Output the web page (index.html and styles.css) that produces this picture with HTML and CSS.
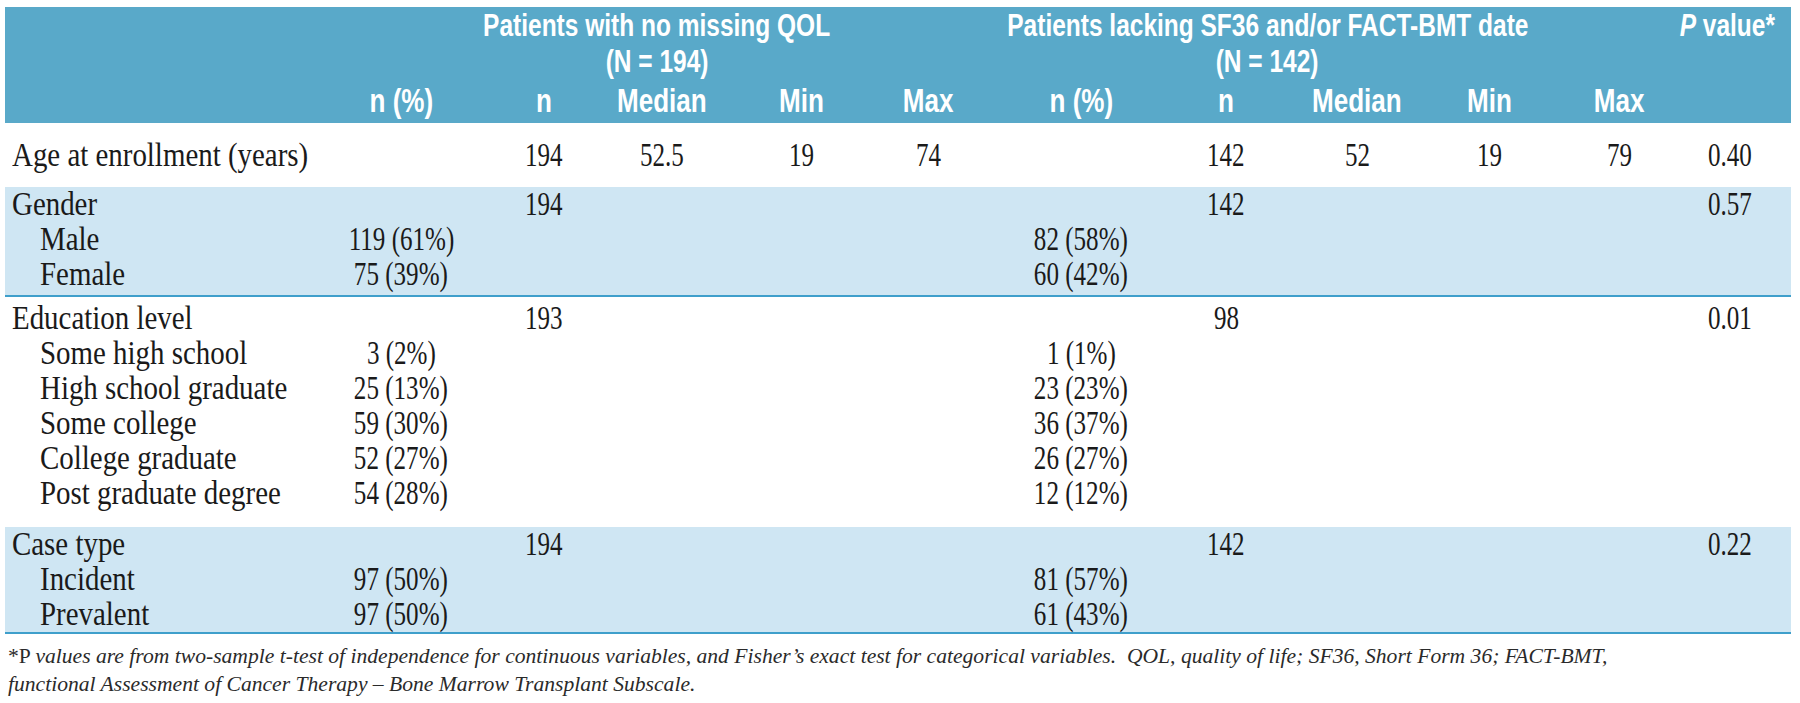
FILE: index.html
```html
<!DOCTYPE html>
<html lang="en">
<head>
<meta charset="utf-8">
<title>QOL table</title>
<link rel="stylesheet" href="styles.css">
</head>
<body>
<div class="table">
  <div class="thead">
    <div class="grp g1"><span class="ht">Patients with no missing QOL</span><span class="ht">(N = 194)</span></div>
    <div class="grp g2"><span class="ht">Patients lacking SF36 and/or FACT-BMT date</span><span class="ht">(N = 142)</span></div>
    <div class="grp pv"><span class="ht"><i>P</i> value*</span></div>
    <div class="row hrow">
      <span></span>
      <span><span class="ht">n (%)</span></span>
      <span><span class="ht">n</span></span>
      <span><span class="ht">Median</span></span>
      <span><span class="ht">Min</span></span>
      <span><span class="ht">Max</span></span>
      <span><span class="ht">n (%)</span></span>
      <span><span class="ht">n</span></span>
      <span><span class="ht">Median</span></span>
      <span><span class="ht">Min</span></span>
      <span><span class="ht">Max</span></span>
      <span></span>
    </div>
  </div>

  <div class="group age">
    <div class="row">
      <span><span class="t">Age at enrollment (years)</span></span>
      <span></span>
      <span><span class="n">194</span></span>
      <span><span class="n">52.5</span></span>
      <span><span class="n">19</span></span>
      <span><span class="n">74</span></span>
      <span></span>
      <span><span class="n">142</span></span>
      <span><span class="n">52</span></span>
      <span><span class="n">19</span></span>
      <span><span class="n">79</span></span>
      <span><span class="n">0.40</span></span>
    </div>
  </div>

  <div class="group band gender">
    <div class="row">
      <span><span class="t">Gender</span></span>
      <span></span>
      <span><span class="n">194</span></span>
      <span></span><span></span><span></span><span></span>
      <span><span class="n">142</span></span>
      <span></span><span></span><span></span>
      <span><span class="n">0.57</span></span>
    </div>
    <div class="row sub">
      <span><span class="t">Male</span></span>
      <span><span class="n">119 (61%)</span></span>
      <span></span><span></span><span></span><span></span>
      <span><span class="n">82 (58%)</span></span>
      <span></span><span></span><span></span><span></span><span></span>
    </div>
    <div class="row sub">
      <span><span class="t">Female</span></span>
      <span><span class="n">75 (39%)</span></span>
      <span></span><span></span><span></span><span></span>
      <span><span class="n">60 (42%)</span></span>
      <span></span><span></span><span></span><span></span><span></span>
    </div>
  </div>

  <div class="group edu">
    <div class="row">
      <span><span class="t">Education level</span></span>
      <span></span>
      <span><span class="n">193</span></span>
      <span></span><span></span><span></span><span></span>
      <span><span class="n">98</span></span>
      <span></span><span></span><span></span>
      <span><span class="n">0.01</span></span>
    </div>
    <div class="row sub">
      <span><span class="t">Some high school</span></span>
      <span><span class="n">3 (2%)</span></span>
      <span></span><span></span><span></span><span></span>
      <span><span class="n">1 (1%)</span></span>
      <span></span><span></span><span></span><span></span><span></span>
    </div>
    <div class="row sub">
      <span><span class="t">High school graduate</span></span>
      <span><span class="n">25 (13%)</span></span>
      <span></span><span></span><span></span><span></span>
      <span><span class="n">23 (23%)</span></span>
      <span></span><span></span><span></span><span></span><span></span>
    </div>
    <div class="row sub">
      <span><span class="t">Some college</span></span>
      <span><span class="n">59 (30%)</span></span>
      <span></span><span></span><span></span><span></span>
      <span><span class="n">36 (37%)</span></span>
      <span></span><span></span><span></span><span></span><span></span>
    </div>
    <div class="row sub">
      <span><span class="t">College graduate</span></span>
      <span><span class="n">52 (27%)</span></span>
      <span></span><span></span><span></span><span></span>
      <span><span class="n">26 (27%)</span></span>
      <span></span><span></span><span></span><span></span><span></span>
    </div>
    <div class="row sub">
      <span><span class="t">Post graduate degree</span></span>
      <span><span class="n">54 (28%)</span></span>
      <span></span><span></span><span></span><span></span>
      <span><span class="n">12 (12%)</span></span>
      <span></span><span></span><span></span><span></span><span></span>
    </div>
  </div>

  <div class="group band case">
    <div class="row">
      <span><span class="t">Case type</span></span>
      <span></span>
      <span><span class="n">194</span></span>
      <span></span><span></span><span></span><span></span>
      <span><span class="n">142</span></span>
      <span></span><span></span><span></span>
      <span><span class="n">0.22</span></span>
    </div>
    <div class="row sub">
      <span><span class="t">Incident</span></span>
      <span><span class="n">97 (50%)</span></span>
      <span></span><span></span><span></span><span></span>
      <span><span class="n">81 (57%)</span></span>
      <span></span><span></span><span></span><span></span><span></span>
    </div>
    <div class="row sub">
      <span><span class="t">Prevalent</span></span>
      <span><span class="n">97 (50%)</span></span>
      <span></span><span></span><span></span><span></span>
      <span><span class="n">61 (43%)</span></span>
      <span></span><span></span><span></span><span></span><span></span>
    </div>
  </div>

  <div class="foot">
    <div class="fl">*P <i>values are from two-sample t-test of independence for continuous variables, and Fisher’s exact test for categorical variables.&nbsp; QOL, quality of life; SF36, Short Form 36; FACT-BMT,</i></div>
    <div class="fl"><i>functional Assessment of Cancer Therapy – Bone Marrow Transplant Subscale.</i></div>
  </div>
</div>
</body>
</html>
```

FILE: styles.css
```css
* {
  box-sizing: border-box;
}

body {
  margin: 0;
  background: #ffffff;
}

.table {
  --cols: 325px 142px 131px 128px 133px 140px 149px 138px 132px 132px 120px 116px;
  margin: 7px 0 0 5px;
  width: 1786px;
  font-family: "Liberation Serif", "Times New Roman", serif;
  color: #1a1a1a;
}

/* header */
.thead {
  display: grid;
  grid-template-columns: var(--cols);
  grid-template-rows: 36px 39px 36px;
  padding: 1px 0 4px;
  background: #59a9c9;
  color: #ffffff;
  font-family: "Liberation Sans", Arial, sans-serif;
  font-weight: bold;
  font-size: 31px;
  line-height: 36px;
}

.grp {
  display: flex;
  flex-direction: column;
  align-items: center;
  white-space: nowrap;
}

.g1 {
  grid-column: 2 / 7;
  grid-row: 1 / 3;
  padding-right: 20px;
}

.g2 {
  grid-column: 7 / 11;
  grid-row: 1 / 3;
  padding-right: 24px;
}

.pv {
  grid-column: 12 / 13;
  grid-row: 1 / 2;
  padding-right: 12px;
}

.hrow {
  grid-column: 1 / -1;
  grid-row: 3 / 4;
  font-size: 31px;
  line-height: 36px;
  height: 36px;
}

.ht {
  display: inline-block;
  transform: scaleX(0.79);
  transform-origin: center;
  white-space: nowrap;
}

/* body rows */
.row {
  display: grid;
  grid-template-columns: var(--cols);
  height: 35px;
  font-size: 33px;
  line-height: 35px;
}

.row > span {
  display: flex;
  justify-content: center;
  white-space: nowrap;
}

.row > span:first-child {
  justify-content: flex-start;
  padding-left: 7px;
}

.row.sub > span:first-child {
  padding-left: 35px;
}

.row > span:nth-child(3) { padding-left: 13px; }
.row > span:nth-child(4) { padding-right: 10px; }
.row > span:nth-child(5) { padding-left: 7px; }
.row > span:nth-child(6) { padding-right: 12px; }
.row > span:nth-child(7) { padding-left: 5px; }
.row > span:nth-child(8) { padding-left: 8px; }
.row > span:nth-child(11) { padding-left: 8px; }
.row > span:nth-child(12) { padding-right: 6px; }

.t {
  display: inline-block;
  transform: scaleX(0.876);
  transform-origin: left center;
}

.n {
  display: inline-block;
  transform: scaleX(0.76);
  transform-origin: center;
}

/* groups */
.age {
  padding: 15px 0 14px;
}

.band {
  background: #cfe6f3;
  border-bottom: 2px solid #3f9fcb;
}

.gender {
  padding: 0 0 3px;
}

.edu {
  padding: 4px 0 16px;
}

.case {
  padding: 0;
}

/* footnote */
.foot {
  margin-top: 8px;
  padding-left: 3px;
  font-size: 21.6px;
  line-height: 28px;
  color: #2a2a2a;
}

.fl {
  white-space: nowrap;
}
```
